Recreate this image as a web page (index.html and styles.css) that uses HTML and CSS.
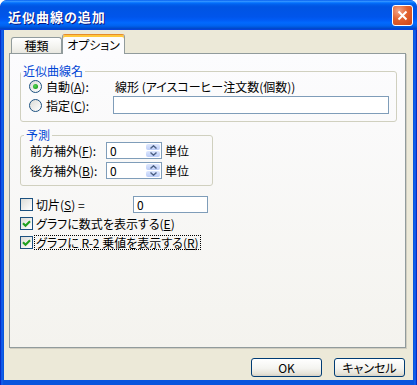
FILE: index.html
```html
<!DOCTYPE html>
<html lang="ja">
<head>
    <meta charset="UTF-8">
    <title>近似曲線の追加</title>
    <link rel="stylesheet" href="styles.css">
</head>
<body>
    <div class="window">
        <div class="titlebar">
            <span class="title">近似曲線の追加</span>
            <span class="close-btn">
                <svg width="11" height="11" viewBox="0 0 11 11"><path d="M1.5 1.5 L9.5 9.5 M9.5 1.5 L1.5 9.5" stroke="#fff" stroke-width="2" fill="none"/></svg>
            </span>
        </div>

        <div class="client">
            <div class="tabs">
                <div class="tab">種類</div>
                <div class="tab active">オプション</div>
            </div>

            <div class="panel">
                <fieldset class="group group-name">
                    <legend>近似曲線名</legend>
                    <div class="row row-auto">
                        <span class="radio checked"></span>
                        <span class="opt-label">自動(<u>A</u>):</span>
                        <span class="auto-name">線形 (アイスコーヒー注文数(個数))</span>
                    </div>
                    <div class="row row-custom">
                        <span class="radio"></span>
                        <span class="opt-label">指定(<u>C</u>):</span>
                        <span class="textbox wide"></span>
                    </div>
                </fieldset>

                <fieldset class="group group-forecast">
                    <legend>予測</legend>
                    <div class="row spin-row">
                        <span class="field-label">前方補外(<u>F</u>):</span>
                        <span class="spinner">
                            <span class="spin-value">0</span>
                            <span class="spin-buttons">
                                <span class="spin-btn"><svg width="7" height="4" viewBox="0 0 7 4"><path d="M0.5 3.5 L3.5 0.8 L6.5 3.5" stroke="#4d6185" stroke-width="1.4" fill="none"/></svg></span>
                                <span class="spin-btn"><svg width="7" height="4" viewBox="0 0 7 4"><path d="M0.5 0.5 L3.5 3.2 L6.5 0.5" stroke="#4d6185" stroke-width="1.4" fill="none"/></svg></span>
                            </span>
                        </span>
                        <span class="unit">単位</span>
                    </div>
                    <div class="row spin-row second">
                        <span class="field-label">後方補外(<u>B</u>):</span>
                        <span class="spinner">
                            <span class="spin-value">0</span>
                            <span class="spin-buttons">
                                <span class="spin-btn"><svg width="7" height="4" viewBox="0 0 7 4"><path d="M0.5 3.5 L3.5 0.8 L6.5 3.5" stroke="#4d6185" stroke-width="1.4" fill="none"/></svg></span>
                                <span class="spin-btn"><svg width="7" height="4" viewBox="0 0 7 4"><path d="M0.5 0.5 L3.5 3.2 L6.5 0.5" stroke="#4d6185" stroke-width="1.4" fill="none"/></svg></span>
                            </span>
                        </span>
                        <span class="unit">単位</span>
                    </div>
                </fieldset>

                <div class="checks">
                    <div class="row check-row">
                        <span class="checkbox"></span>
                        <span class="check-text intercept">切片(<u>S</u>) =</span>
                        <span class="textbox intercept-box">0</span>
                    </div>
                    <div class="row check-row">
                        <span class="checkbox">
                            <svg width="11" height="11" viewBox="0 0 11 11"><path d="M2 5.2 L4.5 7.7 L9 3.2" stroke="#21a121" stroke-width="2.2" fill="none"/></svg>
                        </span>
                        <span class="check-text">グラフに数式を表示する(<u>E</u>)</span>
                    </div>
                    <div class="row check-row">
                        <span class="checkbox">
                            <svg width="11" height="11" viewBox="0 0 11 11"><path d="M2 5.2 L4.5 7.7 L9 3.2" stroke="#21a121" stroke-width="2.2" fill="none"/></svg>
                        </span>
                        <span class="check-text focus">グラフに R-2 乗値を表示する(<u>R</u>)</span>
                    </div>
                </div>
            </div>

            <div class="buttons">
                <span class="btn">OK</span>
                <span class="btn">キャンセル</span>
            </div>
        </div>
    </div>
</body>
</html>
```

FILE: styles.css
```css
* {
    margin: 0;
    padding: 0;
    box-sizing: border-box;
}

body {
    background: #ffffff;
    font-family: "Noto Sans CJK JP", "Liberation Sans", sans-serif;
    font-size: 12px;
    font-feature-settings: "palt";
    color: #000000;
}

u {
    text-decoration: underline;
    text-underline-offset: 1px;
}

/* window frame */
.window {
    width: 417px;
    height: 385px;
    display: flex;
    flex-direction: column;
    padding: 0 4px 5px;
    background: linear-gradient(to right, #001ea0 0, #0840e8 1px, #166aee 2px, #0855dd 3px, #0855dd calc(100% - 3px), #166aee calc(100% - 2px), #0840e8 calc(100% - 1px), #001ea0 100%);
    border-radius: 7px 7px 0 0;
    overflow: hidden;
}

.titlebar {
    height: 30px;
    margin: 0 -4px;
    padding: 0 4px 0 8px;
    display: flex;
    justify-content: space-between;
    align-items: flex-start;
    background: linear-gradient(to bottom, #0058ee 0%, #3593ff 4%, #288eff 6%, #127dff 8%, #036ffc 10%, #0262ee 14%, #0057e5 20%, #0054e3 24%, #0055eb 56%, #005bf5 66%, #026afe 76%, #0062ef 86%, #0052d6 92%, #0046c8 96%, #0840e8 100%);
    border-radius: 7px 7px 0 0;
}

.title {
    margin-top: 8px;
    color: #ffffff;
    font-size: 13px;
    font-weight: bold;
    line-height: 18px;
    letter-spacing: 1px;
    text-shadow: 1px 1px 0 #0a1883;
}

.close-btn {
    width: 21px;
    height: 21px;
    margin-top: 5px;
    display: flex;
    align-items: center;
    justify-content: center;
    border: 1px solid #ffffff;
    border-radius: 3px;
    background: radial-gradient(circle at 30% 25%, #f3a58a 0%, #e2622f 45%, #cc4418 100%);
}

/* client area */
.client {
    flex: 1;
    display: flex;
    flex-direction: column;
    padding: 4px 7px 0 5px;
    background: #ece9d8;
}

.tabs {
    height: 19px;
    padding-left: 2px;
    display: flex;
    align-items: flex-end;
    position: relative;
    z-index: 1;
}

.tab {
    width: 51px;
    height: 16px;
    display: flex;
    align-items: center;
    justify-content: center;
    border: 1px solid #919b9c;
    border-bottom: none;
    border-radius: 3px 3px 0 0;
    background: linear-gradient(to bottom, #ffffff, #f3f3ef 60%, #e9e8e1);
    line-height: 14px;
}

.tab.active {
    width: 63px;
    height: 20px;
    margin-bottom: -1px;
    border-top-color: #e68b2c;
    background: #fcfcfe;
    box-shadow: inset 0 2px 0 #ffc83c;
}

.panel {
    height: 295px;
    padding: 10px 0 0 10px;
    border: 1px solid #919b9c;
    background: linear-gradient(to bottom, #fcfcfe, #f4f3ee);
    box-shadow: 1px 1px 0 #d0cdc0;
}

/* group boxes */
.group {
    border: 1px solid #d0d0bf;
    border-radius: 3px;
}

.group legend {
    padding: 0 2px;
    color: #0046d5;
    line-height: 14px;
}

.row {
    display: flex;
    align-items: center;
}

.group-name {
    width: 377px;
    padding: 0 6px 7px 8px;
}

.group-name legend {
    margin-left: -8px;
}

.row-auto {
    height: 14px;
    margin-top: 1px;
}

.row-custom {
    height: 18px;
    margin-top: 3px;
}

.radio {
    width: 13px;
    height: 13px;
    margin-right: 4px;
    border: 1px solid #1c5180;
    border-radius: 50%;
    background: linear-gradient(135deg, #dcdcd7, #ffffff);
    display: flex;
    align-items: center;
    justify-content: center;
}

.radio.checked::after {
    content: "";
    width: 5px;
    height: 5px;
    border-radius: 50%;
    background: radial-gradient(circle at 40% 40%, #55d655, #21a121 70%);
}

.opt-label {
    width: 67px;
}

.auto-name {
    margin-left: 2px;
}

.textbox {
    height: 18px;
    border: 1px solid #7f9db9;
    background: #ffffff;
}

.wide {
    width: 276px;
}

.group-forecast {
    width: 193px;
    margin-top: 6px;
    padding: 0 6px 6px 9px;
}

.group-forecast legend {
    margin-left: -6px;
}

.spin-row {
    height: 17px;
}

.spin-row.second {
    margin-top: 3px;
}

.field-label {
    width: 76px;
}

.spinner {
    width: 56px;
    height: 17px;
    display: flex;
    border: 1px solid #7f9db9;
    background: #ffffff;
}

.spin-value {
    flex: 1;
    padding-left: 3px;
    line-height: 15px;
}

.spin-buttons {
    width: 16px;
    padding: 1px;
    display: flex;
    flex-direction: column;
    gap: 1px;
}

.spin-btn {
    flex: 1;
    display: flex;
    align-items: center;
    justify-content: center;
    border-radius: 2px;
    background: linear-gradient(to bottom, #dde7fd, #bccdf7);
}

.unit {
    margin-left: 3px;
}

/* check boxes */
.checks {
    margin-top: 10px;
    display: flex;
    flex-direction: column;
    gap: 2px;
}

.check-row {
    height: 17px;
}

.checkbox {
    width: 13px;
    height: 13px;
    margin-right: 1px;
    display: flex;
    align-items: center;
    justify-content: center;
    border: 1px solid #1c5180;
    background: linear-gradient(135deg, #dcdcd7, #ffffff);
}

.check-text {
    padding: 0 1px;
    border: 1px dotted transparent;
    line-height: 13px;
}

.check-text.focus {
    border-color: #000000;
}

.intercept {
    width: 99px;
}

.intercept-box {
    width: 75px;
    height: 17px;
    padding-left: 3px;
    line-height: 15px;
}

/* dialog buttons */
.buttons {
    margin-top: 10px;
    margin-right: 1px;
    display: flex;
    justify-content: flex-end;
    gap: 12px;
}

.btn {
    width: 71px;
    height: 19px;
    display: flex;
    align-items: center;
    justify-content: center;
    border: 1px solid #003c74;
    border-radius: 3px;
    background: linear-gradient(to bottom, #ffffff, #f4f4f0 55%, #e6e3d9 85%, #d6d0c5);
    line-height: 15px;
}
```
